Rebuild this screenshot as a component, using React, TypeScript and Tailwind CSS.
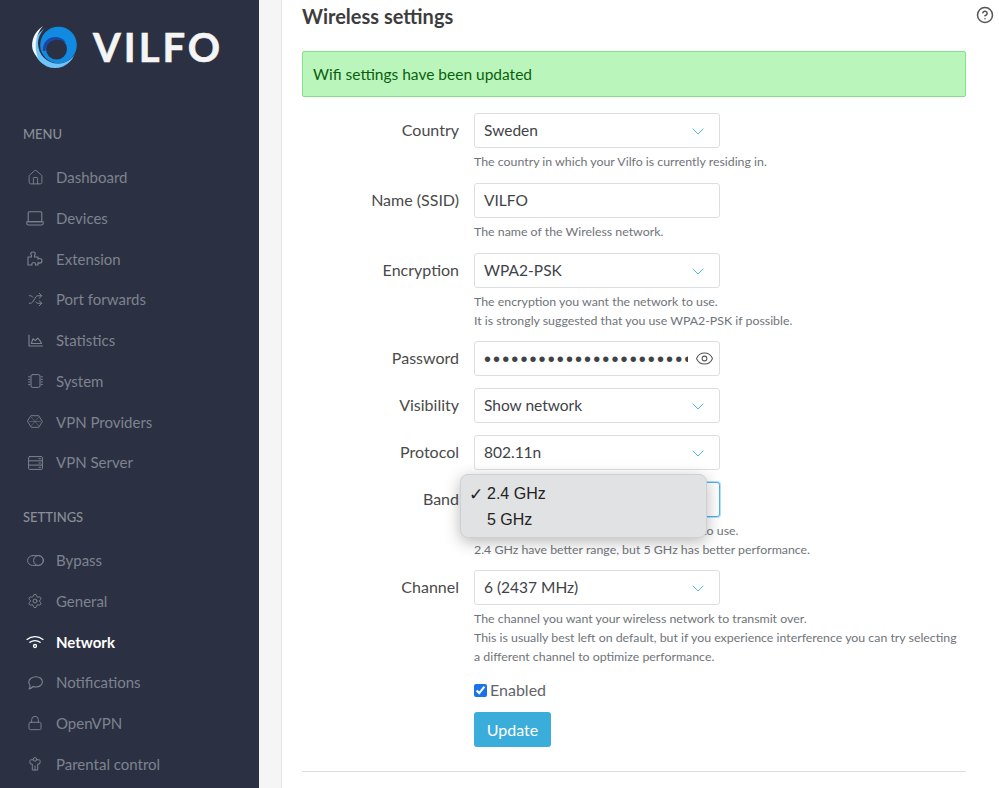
import React from "react";
import { House, Shuffle, Settings, Lock, CircleHelp, Eye } from "lucide-react";

type P = { className?: string };
const S = ({ w = 18, h = 16, vb, children, sw = 1.1 }: { w?: number; h?: number; vb: string; children: React.ReactNode; sw?: number }) => (
  <svg viewBox={vb} width={w} height={h} fill="none" stroke="currentColor" strokeWidth={sw} strokeLinejoin="round" strokeLinecap="round">{children}</svg>
);
const Home = () => <House size={17} strokeWidth={1.3} />;
const LaptopI = () => (
  <S vb="0 0 18 15" w={18} h={15}>
    <rect x="2.2" y="0.8" width="13.6" height="10" rx="1" />
    <path d="M0.8 10.8h16.4v1.4a1.8 1.8 0 0 1-1.8 1.8H2.6a1.8 1.8 0 0 1-1.8-1.8z" />
  </S>
);
const PuzzleI = () => (
  <S vb="0 0 17 15" w={17} h={15}>
    <path d="M1 6h3.500V4.500C4 4 3.800 3.400 3.800 2.800 3.800 1.700 4.800 1 6 1s2.200.7 2.200 1.800c0 .6-.2 1.200-.7 1.700V6H11v2.200c.5-.5 1-.7 1.600-.7 1 0 2.400.5 2.400 2.300s-1.400 2.300-2.400 2.300c-.6 0-1.100-.2-1.600-.7V14H8.500v-1.200c0-.8-1-1.300-1.800-1.300s-1.800.5-1.800 1.300V14H1z" />
  </S>
);
const ShuffleI = () => <Shuffle size={15} strokeWidth={1.6} />;
const AreaI = () => (
  <S vb="0 0 15 13" w={15} h={13} sw={1.1}>
    <path d="M1 1v11h13.500" />
    <path d="M3.300 9.500 5 4.800l2.400 1.800 2.300-2.400 2.400 2.600 1.400 2.700z" />
  </S>
);
const Chip = () => (
  <S vb="0 0 15 14" w={15} h={14} sw={1}>
    <rect x="3" y="0.6" width="9" height="12.8" rx="1.4" />
    <path d="M0.6 2.800h1.200M0.6 5.400h1.200M0.6 8h1.200M0.6 10.600h1.200M13.200 2.800h1.200M13.200 5.400h1.200M13.200 8h1.200M13.200 10.600h1.200" />
  </S>
);
const Provider = () => (
  <S vb="0 0 16 13" w={16} h={13} sw={0.9}>
    <path d="M4.200.7h7.600L15.400 6.500l-3.600 5.800H4.200L.6 6.500z" />
    <path d="M4.200 2.200l7.600 8.600M11.800 2.200l-7.600 8.600M2.500 6.500h11" opacity="0.55" />
  </S>
);
const Rack = () => (
  <S vb="0 0 15 14" w={15} h={14} sw={1}>
    <rect x="0.6" y="0.6" width="13.800" height="12.800" rx="1" />
    <path d="M.6 4.800h13.800M.6 9.100h13.800M11 2.700h1.500M11 7h1.500M11 11.300h1.500" />
  </S>
);
const Toggle = () => (
  <S vb="0 0 17 11" w={17} h={11} sw={1}>
    <rect x="0.6" y="0.6" width="15.800" height="9.800" rx="4.900" />
    <circle cx="11.500" cy="5.500" r="4.900" />
  </S>
);
const Gear = () => <Settings size={16} strokeWidth={1.5} />;
const Wifi = () => (
  <S vb="0 0 18 14" w={18} h={14} sw={1.3}>
    <path d="M1 4.400C5.500.6 12.500.6 17 4.400" />
    <path d="M3.900 7.300C6.800 5 11.200 5 14.100 7.300" />
    <circle cx="9" cy="11" r="1.500" />
  </S>
);
const Bubble = () => (
  <S vb="0 0 15 14" w={15} h={14} sw={1.1}>
    <path d="M8 .8c3.600 0 6.400 2.300 6.400 5.100S11.600 11 8 11c-1 0-2-.2-2.800-.5-1 1-2.600 2.200-4.200 2.500.7-1 1-2.300 1.100-3.500C1.200 8.500.8 7.200.8 5.900.8 3.100 4.400.8 8 .8z" />
  </S>
);
const LockI = () => <Lock size={16} strokeWidth={1.4} />;
const Robe = () => (
  <S vb="0 0 12 14" w={12} h={14} sw={1}>
    <circle cx="6" cy="2.400" r="1.800" />
    <path d="M4.200 2.800H2.200C1.200 2.800.6 3.500.8 4.500L1.400 7h1.900v6h5.400V7h1.900l.6-2.500c.2-1-.4-1.700-1.400-1.700H7.800" />
    <path d="M6 9v4" />
  </S>
);

function Item({ icon: Icon, label, active }: { icon: React.ComponentType<P>; label: string; active?: boolean }) {
  return (
    <div className={`flex items-center h-[40.75px] text-[15px] ${active ? "text-white font-bold" : "text-[#7e838f]"}`}>
      <span className="w-[24px] ml-[23px] mr-[9px] flex justify-center">
        <Icon />
      </span>
      {label}
    </div>
  );
}

function Chevron() {
  return (
    <svg viewBox="0 0 12 7" width="12" height="7" fill="none" stroke="#52b9e5" strokeWidth="1" className="absolute right-[15px] top-[14px]">
      <path d="M.7.7 6 6l5.300-5.300" />
    </svg>
  );
}

function Row({ label, children, help, mb = "mb-[12px]" }: { label: string; children: React.ReactNode; help?: string[]; mb?: string }) {
  return (
    <div className={`flex ${mb}`}>
      <div className="w-[172px] h-[35px] pr-[15px] text-right text-[16px] leading-[34px] text-[#4a4a4a] shrink-0">{label}</div>
      <div className="min-w-0">
        {children}
        {help && (
          <div className="mt-[4px] text-[12.35px] leading-[19px] text-[#6f7479] whitespace-nowrap">
            {help.map((h) => <div key={h}>{h}</div>)}
          </div>
        )}
      </div>
    </div>
  );
}

function Field({ value, chevron = true, focus }: { value?: string; chevron?: boolean; focus?: boolean }) {
  return (
    <div className={`relative w-[246px] h-[35px] rounded-[3px] bg-white pl-[9px] text-[15.5px] leading-[33px] text-[#3f4348] border ${focus ? "border-[#4fb3e8] shadow-[0_0_0_1px_#b5e0f5]" : "border-[#dcdfe2]"}`}>
      {value}
      {chevron && <Chevron />}
    </div>
  );
}

export default function App() {
  return (
    <div className="flex h-[788px] w-[999px] overflow-hidden bg-white text-[#3a3a3a]" style={{ fontFamily: '"Lato", "Liberation Sans", sans-serif' }}>
      <aside className="w-[259px] shrink-0 bg-[#2b3142]">
        <div className="flex items-center h-[93px] pl-[31px]">
          <svg viewBox="0 0 46 46" width="46" height="46" className="mr-[16px] mt-[1px]">
            <circle cx="24" cy="23" r="21" fill="#6fc4fb" />
            <circle cx="27" cy="19.500" r="20" fill="#2b3142" />
            <circle cx="27.500" cy="21" r="18.300" fill="#118ae2" />
            <circle cx="25.500" cy="25" r="10.500" fill="#2b3142" />
            <path d="M12 27C11 18 18 12 26 13c5 1 8 3 9 6-4-3.500-10-4-14-2-4 2-6 5-6.500 10z" fill="#1a46a6" />
            <path d="M12 2C3 8 0 17 1.500 25c1 4 3.500 7 5.500 9C3 24 4 11 12 2z" fill="#eef8ff" />
          </svg>
          <span className="text-[40px] font-bold tracking-[3px] leading-none text-[#f5f5f5] [-webkit-text-stroke:0.6px_#f5f5f5]">VILFO</span>
        </div>
        <div className="ml-[23px] mt-[33px] mb-[15px] text-[13px] leading-[16px] font-medium text-[#8a8e99]">MENU</div>
        <Item icon={Home} label="Dashboard" />
        <Item icon={LaptopI} label="Devices" />
        <Item icon={PuzzleI} label="Extension" />
        <Item icon={ShuffleI} label="Port forwards" />
        <Item icon={AreaI} label="Statistics" />
        <Item icon={Chip} label="System" />
        <Item icon={Provider} label="VPN Providers" />
        <Item icon={Rack} label="VPN Server" />
        <div className="ml-[23px] mt-[26px] mb-[15px] text-[13px] leading-[16px] font-medium text-[#8a8e99]">SETTINGS</div>
        <Item icon={Toggle} label="Bypass" />
        <Item icon={Gear} label="General" />
        <Item icon={Wifi} label="Network" active />
        <Item icon={Bubble} label="Notifications" />
        <Item icon={LockI} label="OpenVPN" />
        <Item icon={Robe} label="Parental control" />
      </aside>
      <div className="w-[22px] shrink-0 bg-[#f5f5f5] border-r border-[#e4e4e4] box-content" />
      <main className="flex-1 min-w-0 pl-[20px] pr-[33px]">
        <div className="flex items-start justify-between h-[51px]">
          <h1 className="text-[20px] leading-[33px] font-bold text-[#3d3d3d]">Wireless settings</h1>
          <CircleHelp size={18} strokeWidth={2} className="text-[#555] mt-[6px] -mr-[27.5px]" />
        </div>
        <div className="h-[46px] rounded-[2px] border border-[#85e08b] bg-[#baf6bb] pl-[10px] text-[15.5px] leading-[44px] text-[#0b6010]">Wifi settings have been updated</div>
        <div className="mt-[16px] relative">
          <Row label="Country" help={["The country in which your Vilfo is currently residing in."]}><Field value="Sweden" /></Row>
          <Row label="Name (SSID)" help={["The name of the Wireless network."]}><Field value="VILFO" chevron={false} /></Row>
          <Row label="Encryption" mb="mb-[11px]" help={["The encryption you want the network to use.", "It is strongly suggested that you use WPA2-PSK if possible."]}><Field value="WPA2-PSK" /></Row>
          <Row label="Password">
            <div className="relative w-[246px] h-[35px] rounded-[3px] border border-[#dcdfe2] pl-[9px] flex items-center">
              <span className="block w-[204px] h-[24px] leading-[24px] overflow-hidden whitespace-nowrap text-[20px] tracking-[2.1px] text-[#3f4348]" style={{ fontFamily: '"Liberation Sans", sans-serif' }}>{"•".repeat(23)}</span>
              <Eye size={19} strokeWidth={1.3} className="absolute right-[5px] top-[7px] text-[#555]" />
            </div>
          </Row>
          <Row label="Visibility"><Field value="Show network" /></Row>
          <Row label="Protocol"><Field value="802.11n" /></Row>
          <Row label="Band" mb="mb-[11px]" help={["The frequency that you want the network to use.", "2.4 GHz have better range, but 5 GHz has better performance."]}><Field focus chevron={false} /></Row>
          <Row label="Channel" help={["The channel you want your wireless network to transmit over.", "This is usually best left on default, but if you experience interference you can try selecting", "a different channel to optimize performance."]}><Field value="6 (2437 MHz)" /></Row>
          <div className="ml-[172px] flex items-center h-[24px] text-[16px] text-[#5f656a]">
            <input type="checkbox" defaultChecked className="w-[13px] h-[13px] mr-[3px] accent-[#1a73e8]" />
            Enabled
          </div>
          <button className="ml-[172px] mt-[10px] block w-[77px] h-[35px] rounded-[3px] bg-[#3badda] text-white text-[16px]">Update</button>
          <div className="mt-[24px] border-t border-[#dedede]" />
          <div className="absolute left-[158px] top-[361px] w-[247px] h-[64px] rounded-[8px] border border-[#cfd0d1] bg-[#e1e2e3] text-[16px] leading-[26px] text-[#222] shadow-[0_4px_16px_rgba(0,0,0,0.28)] py-[6px]" style={{ fontFamily: '"Liberation Sans", sans-serif' }}>
            <div className="pl-[26px] relative"><span className="absolute left-[8px] text-[17px] font-bold" style={{ fontFamily: '"DejaVu Sans", sans-serif' }}>✓</span>2.4 GHz</div>
            <div className="pl-[26px]">5 GHz</div>
          </div>
        </div>
      </main>
    </div>
  );
}
